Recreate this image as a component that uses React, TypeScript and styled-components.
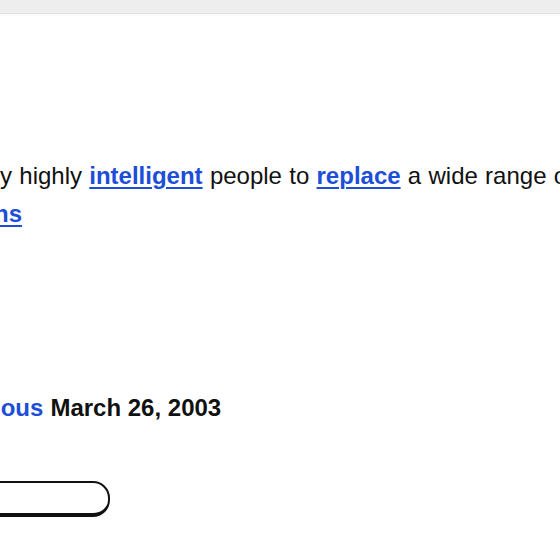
import React from "react";
import styled, { createGlobalStyle } from "styled-components";

const GlobalStyle = createGlobalStyle`
  html, body {
    margin: 0;
    padding: 0;
    background: #ffffff;
    overflow: hidden;
  }
  body {
    font-family: "Liberation Sans", Arial, sans-serif;
    color: #111111;
  }
`;

const TopBar = styled.header`
  height: 13px;
  background: #eeeeee;
  border-bottom: 1px solid #e2e2e2;
  box-shadow: 0 1px 2px rgba(0, 0, 0, 0.04);
`;

const Content = styled.main`
  margin-left: -118px;
  width: 830px;
`;

const Paragraph = styled.p`
  margin: 143px 0 0;
  font-size: 24px;
  line-height: 38px;
  word-spacing: 0.6px;
  color: #111111;
`;

const Link = styled.a`
  color: #1d4ed8;
  font-weight: 700;
  text-decoration: underline;
  text-underline-offset: 3px;
  text-decoration-thickness: 2px;
`;

const DateRow = styled.div`
  margin-top: 156px;
  padding-left: 60px;
  display: flex;
  align-items: baseline;
  gap: 7px;
  font-size: 24px;
  line-height: 38px;
  font-weight: 700;
`;

const NavLink = styled.a`
  color: #1d4ed8;
  text-decoration: none;
`;

const DateText = styled.span`
  color: #111111;
`;

const Button = styled.button`
  display: block;
  box-sizing: border-box;
  margin-top: 54px;
  width: 228px;
  height: 36px;
  border: 2px solid #111111;
  border-bottom-width: 4px;
  border-radius: 17px;
  background: #ffffff;
  font-family: inherit;
  font-size: 18px;
`;

export default function App() {
  return (
    <>
      <GlobalStyle />
      <TopBar />
      <Content>
        <Paragraph>
          designed by highly <Link href="#">intelligent</Link> people to{" "}
          <Link href="#">replace</Link> a wide range of desktop{" "}
          <Link href="#">applications</Link>
        </Paragraph>
        <DateRow>
          <NavLink href="#">Previous</NavLink>
          <DateText>March 26, 2003</DateText>
        </DateRow>
        <Button type="button" aria-label="More" />
      </Content>
    </>
  );
}
